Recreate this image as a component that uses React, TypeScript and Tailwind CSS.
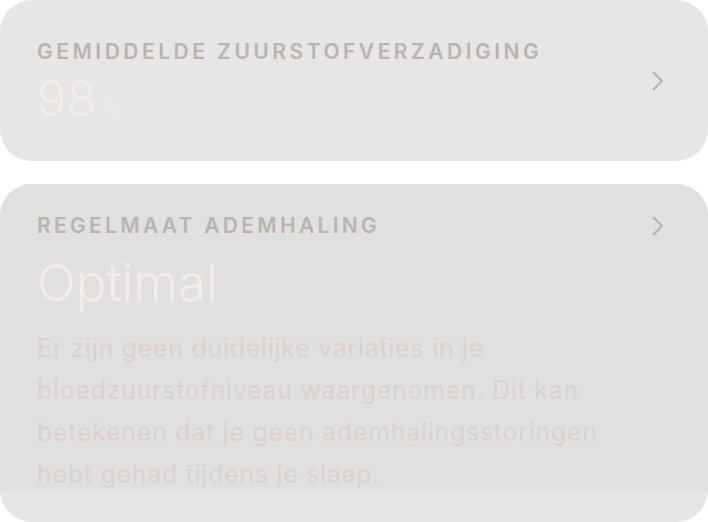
import React from "react";

function Chevron({ className = "" }: { className?: string }) {
  return (
    <svg
      width="14"
      height="22"
      viewBox="0 0 14 22"
      fill="none"
      className={className}
    >
      <path
        d="M2.5 2.5 L11 11 L2.5 19.5"
        stroke="#b9b0ab"
        strokeWidth="2"
        strokeLinecap="round"
        strokeLinejoin="round"
      />
    </svg>
  );
}

export default function App() {
  return (
    <div
      className="w-[708px] h-[522px] bg-white flex flex-col gap-[23px] overflow-hidden"
      style={{ fontFamily: "Inter, 'Liberation Sans', sans-serif" }}
    >
      {/* average oxygen saturation */}
      <div className="h-[161px] shrink-0 rounded-[32px] bg-[#e6e6e6] flex items-center pl-[37px] pr-[43px]">
        <div className="flex-1 flex flex-col pt-[2px]">
          <div className="text-[21px] leading-[24px] font-semibold tracking-[3.5px] text-[#bcb3ae]">
            GEMIDDELDE ZUURSTOFVERZADIGING
          </div>
          <div className="flex items-baseline gap-[8px] mt-[10px] text-[#f5ece8]">
            <span className="text-[49px] leading-[50px] font-light">98</span>
            <span className="text-[20px] leading-[20px] font-light">%</span>
          </div>
        </div>
        <Chevron />
      </div>

      {/* breathing regularity */}
      <div className="flex-1 rounded-[32px] bg-[#e6e6e6] overflow-hidden flex flex-col">
        <div className="h-[308px] shrink-0 bg-[#e0e0e0] pl-[37px] pr-[43px] pt-[30px]">
          <div className="flex items-center justify-between">
            <div className="text-[21px] leading-[24px] font-semibold tracking-[3.3px] text-[#bcb3ae]">
              REGELMAAT ADEMHALING
            </div>
            <Chevron />
          </div>
          <div className="text-[51px] leading-[60px] font-light text-[#f5ece8] mt-[15px]">
            Optimal
          </div>
          <p className="text-[25px] leading-[42px] tracking-[0.7px] text-[#dcd2cd] mt-[14px]">
            Er zijn geen duidelijke variaties in je
            <br />
            bloedzuurstofniveau waargenomen. Dit kan
            <br />
            betekenen dat je geen ademhalingsstoringen
            <br />
            hebt gehad tijdens je slaap.
          </p>
        </div>
      </div>
    </div>
  );
}
